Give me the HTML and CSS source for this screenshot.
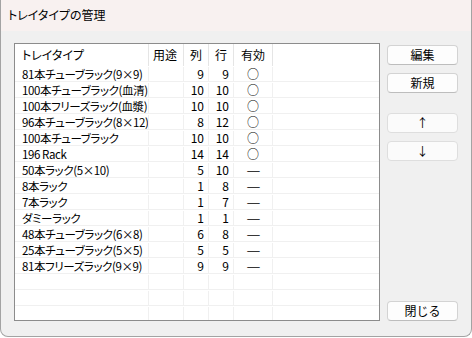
FILE: index.html
```html
<!DOCTYPE html>
<html lang="ja">
<head>
    <meta charset="UTF-8">
    <meta name="viewport" content="width=device-width, initial-scale=1.0">
    <title>トレイタイプの管理</title>
    <link rel="stylesheet" href="styles.css">
</head>
<body>

<div class="window">
    <div class="titlebar">トレイタイプの管理</div>

    <div class="content">
        <div class="list">
            <div class="row head">
                <div class="cell name">トレイタイプ</div>
                <div class="cell">用途</div>
                <div class="cell mid">列</div>
                <div class="cell mid">行</div>
                <div class="cell mid">有効</div>
                <div class="cell"></div>
            </div>

            <div class="row"><div class="cell name">81本チューブラック(9×9)</div><div class="cell"></div><div class="cell num">9</div><div class="cell num">9</div><div class="cell mid">○</div><div class="cell"></div></div>
            <div class="row"><div class="cell name">100本チューブラック(血清)</div><div class="cell"></div><div class="cell num">10</div><div class="cell num">10</div><div class="cell mid">○</div><div class="cell"></div></div>
            <div class="row"><div class="cell name">100本フリーズラック(血漿)</div><div class="cell"></div><div class="cell num">10</div><div class="cell num">10</div><div class="cell mid">○</div><div class="cell"></div></div>
            <div class="row"><div class="cell name">96本チューブラック(8×12)</div><div class="cell"></div><div class="cell num">8</div><div class="cell num">12</div><div class="cell mid">○</div><div class="cell"></div></div>
            <div class="row"><div class="cell name">100本チューブラック</div><div class="cell"></div><div class="cell num">10</div><div class="cell num">10</div><div class="cell mid">○</div><div class="cell"></div></div>
            <div class="row"><div class="cell name">196 Rack</div><div class="cell"></div><div class="cell num">14</div><div class="cell num">14</div><div class="cell mid">○</div><div class="cell"></div></div>
            <div class="row"><div class="cell name">50本ラック(5×10)</div><div class="cell"></div><div class="cell num">5</div><div class="cell num">10</div><div class="cell mid"><span class="dash">—</span></div><div class="cell"></div></div>
            <div class="row"><div class="cell name">8本ラック</div><div class="cell"></div><div class="cell num">1</div><div class="cell num">8</div><div class="cell mid"><span class="dash">—</span></div><div class="cell"></div></div>
            <div class="row"><div class="cell name">7本ラック</div><div class="cell"></div><div class="cell num">1</div><div class="cell num">7</div><div class="cell mid"><span class="dash">—</span></div><div class="cell"></div></div>
            <div class="row"><div class="cell name">ダミーラック</div><div class="cell"></div><div class="cell num">1</div><div class="cell num">1</div><div class="cell mid"><span class="dash">—</span></div><div class="cell"></div></div>
            <div class="row"><div class="cell name">48本チューブラック(6×8)</div><div class="cell"></div><div class="cell num">6</div><div class="cell num">8</div><div class="cell mid"><span class="dash">—</span></div><div class="cell"></div></div>
            <div class="row"><div class="cell name">25本チューブラック(5×5)</div><div class="cell"></div><div class="cell num">5</div><div class="cell num">5</div><div class="cell mid"><span class="dash">—</span></div><div class="cell"></div></div>
            <div class="row"><div class="cell name">81本フリーズラック(9×9)</div><div class="cell"></div><div class="cell num">9</div><div class="cell num">9</div><div class="cell mid"><span class="dash">—</span></div><div class="cell"></div></div>

            <div class="row"><div class="cell name"></div><div class="cell"></div><div class="cell"></div><div class="cell"></div><div class="cell"></div><div class="cell"></div></div>
            <div class="row"><div class="cell name"></div><div class="cell"></div><div class="cell"></div><div class="cell"></div><div class="cell"></div><div class="cell"></div></div>
            <div class="row"><div class="cell name"></div><div class="cell"></div><div class="cell"></div><div class="cell"></div><div class="cell"></div><div class="cell"></div></div>
        </div>

        <div class="buttons">
            <button class="btn">編集</button>
            <button class="btn">新規</button>
            <button class="btn arrow up">↑</button>
            <button class="btn arrow">↓</button>
            <button class="btn close">閉じる</button>
        </div>
    </div>
</div>

</body>
</html>
```

FILE: styles.css
```css
body {
    margin: 0;
    background-color: #ffffff;
    font-family: "Noto Sans CJK JP", "Noto Sans", sans-serif;
    font-size: 12px;
    color: #000;
}

.window {
    width: 470px;
    height: 336px;
    border: 1px solid #a3a3a3;
    border-top: none;
    border-radius: 0 0 8px 8px;
    background-color: #f0f0f0;
    overflow: hidden;
}

.titlebar {
    height: 31px;
    line-height: 29px;
    padding-left: 7px;
    background-color: #f8f1f0;
    font-feature-settings: "palt";
}

.content {
    display: flex;
    padding: 12px 0 0 13px;
}

.list {
    width: 364px;
    height: 276px;
    border: 1px solid #8c8c8c;
    background-color: #fff;
    overflow: hidden;
}

.row {
    display: grid;
    grid-template-columns: 134px 35px 25px 25px 39px 1fr;
    height: 16px;
    line-height: 14px;
    padding-top: 1px;
    border-bottom: 1px solid #f0f0f0;
    box-sizing: border-box;
}

.row.head {
    height: 22px;
    line-height: 22px;
    padding-top: 0;
    border-bottom: none;
    font-feature-settings: "palt";
}

.cell {
    border-right: 1px solid #f0f0f0;
    padding: 0 4px;
    white-space: nowrap;
}

.row.head .cell {
    border-right-color: #e5e5e5;
}

.cell:last-child {
    border-right: none;
}

.cell.name {
    padding: 0 0 0 7px;
    font-size: 11.5px;
    letter-spacing: -0.4px;
    font-feature-settings: "palt";
    overflow: hidden;
}

.row.head .cell.name {
    font-size: 12px;
    letter-spacing: 0;
}

.cell.num {
    text-align: right;
    padding-right: 4px;
}

.cell.mid {
    text-align: center;
    padding: 0;
}

.dash {
    display: inline-block;
    transform: scaleX(1.3);
}

.buttons {
    display: flex;
    flex-direction: column;
    margin-left: 7px;
    padding-top: 2px;
    height: 276px;
}

.btn {
    width: 71px;
    height: 20px;
    padding: 0;
    margin-bottom: 8px;
    border: 1px solid #d3d3d3;
    border-bottom-color: #bdbdbd;
    border-radius: 4px;
    background-color: #fdfdfd;
    font-family: inherit;
    font-size: 12px;
    line-height: 16px;
    color: #000;
}

.btn.up {
    margin-top: 12px;
}

.btn.arrow {
    border-color: #dedede;
    background-color: #fbfbfb;
}

.btn.close {
    margin-top: auto;
    margin-bottom: 0;
}
```
